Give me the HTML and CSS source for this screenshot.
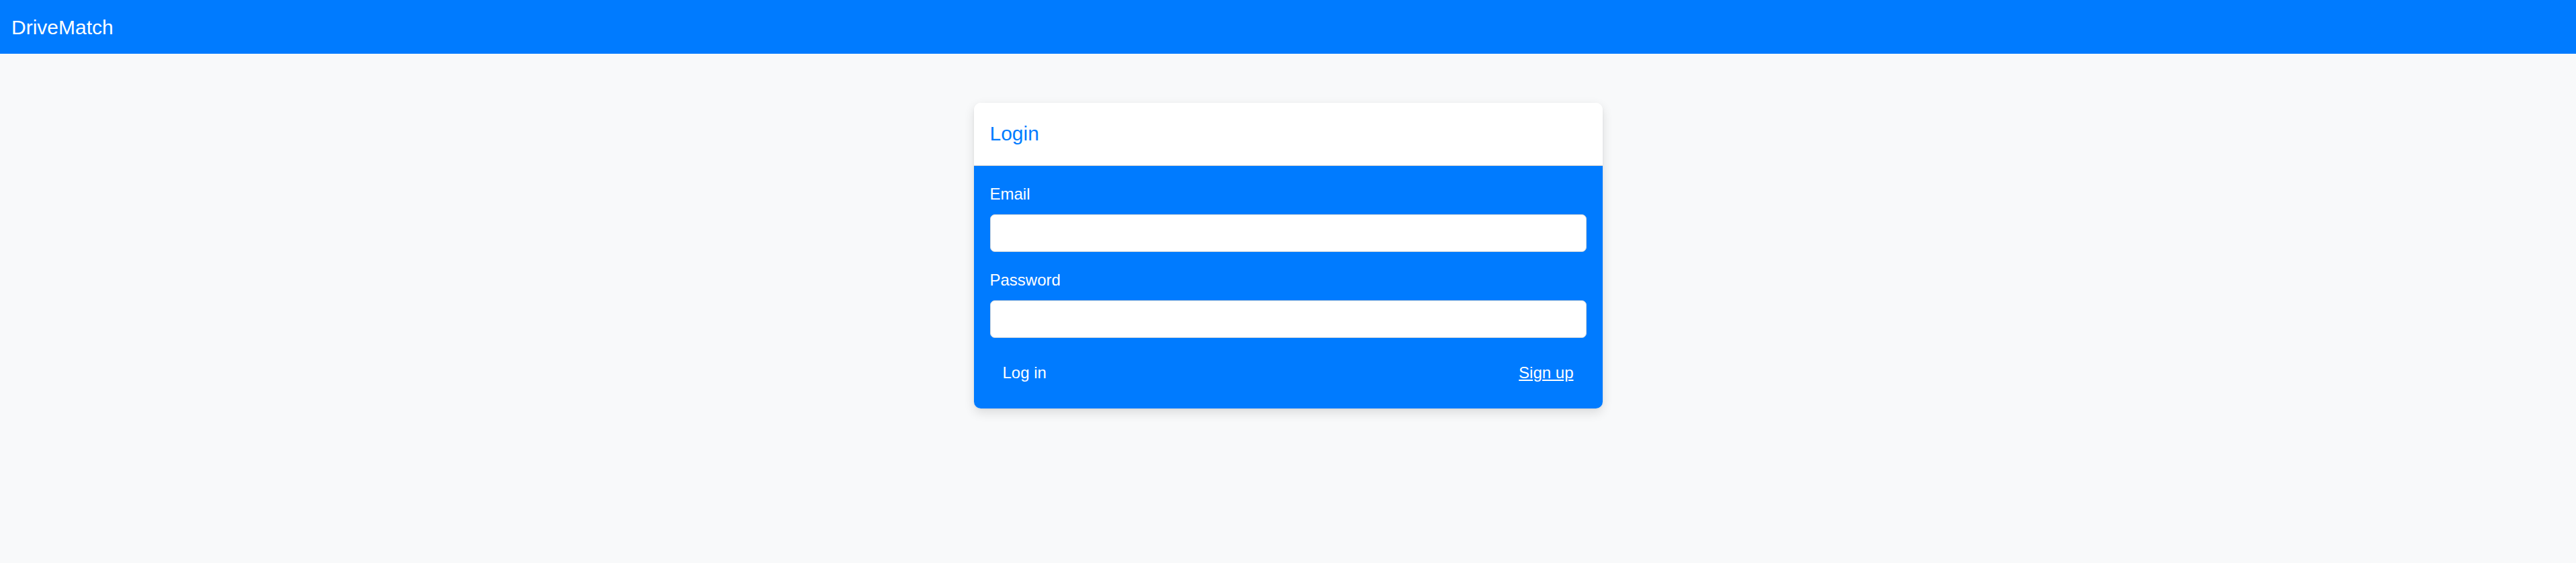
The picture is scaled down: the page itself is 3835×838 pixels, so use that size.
FILE: index.html
```html
<!DOCTYPE html>
<html lang="en">
<head>
<meta charset="utf-8">
<title>DriveMatch</title>
<link rel="stylesheet" href="styles.css">
</head>
<body>
<nav class="navbar">
  <a class="brand" href="#">DriveMatch</a>
</nav>
<main class="main">
  <div class="card">
    <div class="card-header">
      <h5 class="card-title">Login</h5>
    </div>
    <form class="card-body">
      <div class="form-group">
        <label class="label" for="email">Email</label>
        <input class="input" id="email" type="email">
      </div>
      <div class="form-group">
        <label class="label" for="password">Password</label>
        <input class="input" id="password" type="password">
      </div>
      <div class="actions">
        <button class="btn" type="button">Log in</button>
        <a class="btn link" href="#">Sign up</a>
      </div>
    </form>
  </div>
</main>
</body>
</html>
```
FILE: styles.css
```css
* { box-sizing: border-box; }
html, body { margin: 0; padding: 0; }
body {
  background: #f8f9fa;
  font-family: "Liberation Sans", Arial, sans-serif;
  font-size: 24px;
  line-height: 1.5;
  color: #212529;
  min-height: 838px;
}
.navbar {
  height: 80px;
  background: #007bff;
  display: flex;
  align-items: center;
  padding: 0 17px;
}
.brand {
  color: #fff;
  text-decoration: none;
  font-size: 30px;
  line-height: 36px;
  margin-top: 2px;
}
.main {
  padding-top: 73px;
  display: flex;
  justify-content: center;
}
.card {
  width: 936px;
  border-radius: 10px;
  overflow: hidden;
  box-shadow: 0 6px 16px rgba(0, 0, 0, 0.12), 0 1px 3px rgba(0, 0, 0, 0.06);
  background: #fff;
}
.card-header {
  background: #fff;
  padding: 28px 24px 29px;
  border-bottom: 1px solid #cfcfcf;
}
.card-title {
  margin: 0;
  font-size: 30px;
  line-height: 36px;
  font-weight: 400;
  color: #007bff;
}
.card-body {
  background: #007bff;
  padding: 24px 24px 25px;
  margin: 0;
}
.form-group {
  margin-bottom: 24px;
}
.label {
  display: block;
  color: #fff;
  margin-bottom: 12px;
  line-height: 36px;
}
.input {
  display: block;
  width: 100%;
  height: 56px;
  border: 1px solid #ced4da;
  border-radius: 7px;
  background: #fff;
  font: inherit;
  padding: 9px 18px;
  outline: none;
}
.actions {
  display: flex;
  justify-content: space-between;
  align-items: center;
}
.btn {
  display: inline-block;
  font: inherit;
  line-height: 36px;
  color: #fff;
  background: transparent;
  border: 1px solid transparent;
  padding: 9px 18px;
  cursor: pointer;
  text-decoration: none;
}
.link {
  text-decoration: underline;
}
```
